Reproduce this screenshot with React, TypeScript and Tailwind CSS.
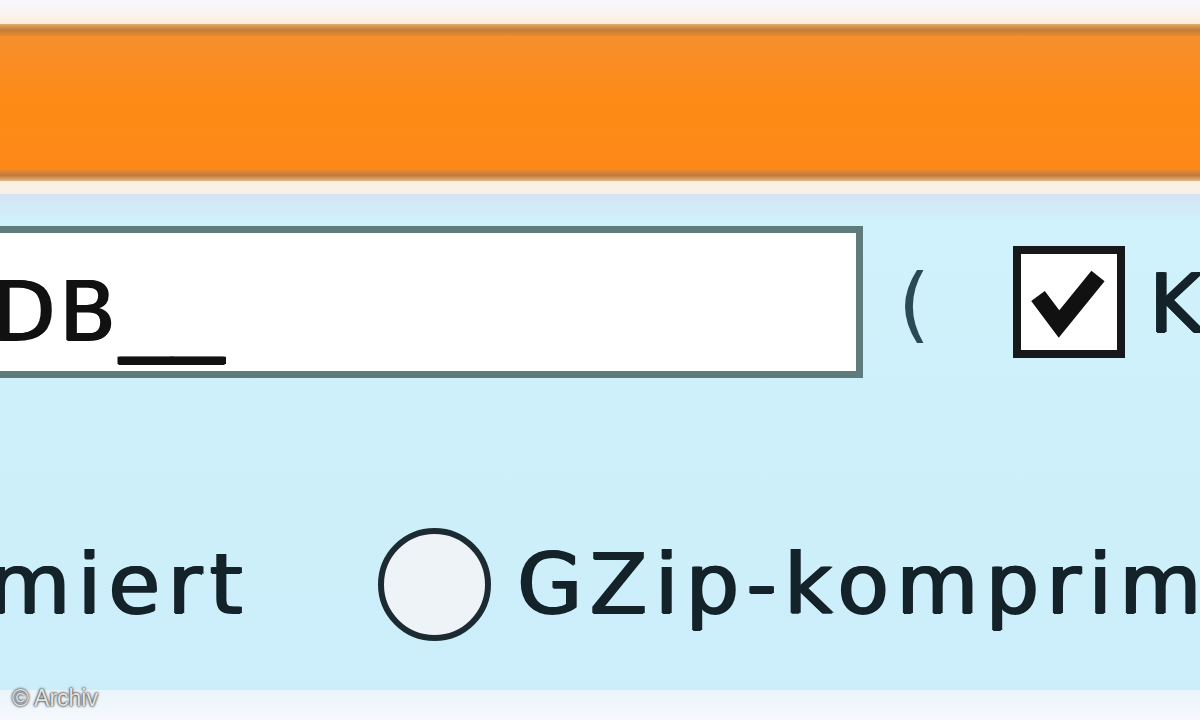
const font = { fontFamily: '"DejaVu Sans", Verdana, sans-serif' };

function CheckBox() {
  return (
    <div className="relative h-[112px] w-[112px] shrink-0 border-[8px] border-[#161819] bg-white">
      <svg className="absolute inset-0 h-full w-full" viewBox="0 0 96 96" fill="none">
        <polyline
          points="17,42 38,70 77,22"
          stroke="#111"
          strokeWidth="17"
          strokeLinejoin="miter"
          strokeLinecap="butt"
        />
      </svg>
    </div>
  );
}

function Radio() {
  return <div className="h-[113px] w-[113px] shrink-0 rounded-full border-[6px] border-[#1c2a31] bg-[#eef3f7]" />;
}

export default function App() {
  return (
    <div className="relative flex h-[720px] w-[1200px] flex-col overflow-hidden bg-[#cdf0fb]" style={font}>
      {/* orange header bar */}
      <div className="h-[24px] bg-gradient-to-b from-[#f8f7fd] via-[#faf4f3] to-[#fcefd8]" />
      <div className="h-[12px] bg-gradient-to-b from-[#e3ad68] via-[#c17c38] to-[#e98d2c]" />
      <div className="h-[134px] bg-gradient-to-b from-[#f6902c] via-[#fe8a14] to-[#fd8819]" />
      <div className="h-[11px] bg-gradient-to-b from-[#e58a33] via-[#c27b3c] to-[#e5b684]" />
      <div className="h-[13px] bg-gradient-to-b from-[#fbf0e0] to-[#f8f1e6]" />

      {/* form area */}
      <div className="flex flex-1 flex-col bg-gradient-to-b from-[#d5e3f5] via-[#cff2fb] via-[6%] to-[#cbeefa]">
        <div className="mt-[32px] -ml-[115px] flex h-[152px] items-center whitespace-nowrap text-[82px] leading-none text-[#14222a] [text-shadow:1.5px_0_0_currentColor,-1px_0_0_currentColor,0_0.5px_0_currentColor]">
          <div className="flex h-[152px] w-[978px] shrink-0 items-center border-[7px] border-[#5f7b7b] bg-white pl-[10px] pt-[4px] text-[#111]">
            <span className="tracking-[4px]">
              __DB<span className="text-[104px] tracking-normal">__</span>
            </span>
          </div>
          <span className="ml-[35px] pt-[4px] text-[#2a4a55] [text-shadow:none]">(</span>
          <div className="ml-[83px]">
            <CheckBox />
          </div>
          <span className="ml-[24px] pt-[4px] tracking-[7px]">Künftig verwenden )</span>
        </div>

        <div className="mt-[146px] flex h-[120px] items-center whitespace-nowrap text-[84px] leading-none tracking-[7.5px] text-[#14222a] [text-shadow:1.5px_0_0_currentColor,-1px_0_0_currentColor,0_0.5px_0_currentColor]">
          <div className="flex w-[250px] shrink-0 justify-end overflow-hidden">
            <span>Zip-komprimiert</span>
          </div>
          <div className="ml-[128px]">
            <Radio />
          </div>
          <span className="ml-[26px]">GZip-komprimiert</span>
        </div>
      </div>

      <div className="h-[30px] bg-gradient-to-b from-[#eaf5fb] to-[#f5f8fc]" />

      <div
        className="absolute bottom-[10px] left-[12px] text-[23px] leading-none text-[#e4e4e4] [text-shadow:0_0_2px_#222,0_0_3px_#444]"
        style={{ fontFamily: '"Liberation Sans", Arial, sans-serif' }}
      >
        © Archiv
      </div>
    </div>
  );
}
